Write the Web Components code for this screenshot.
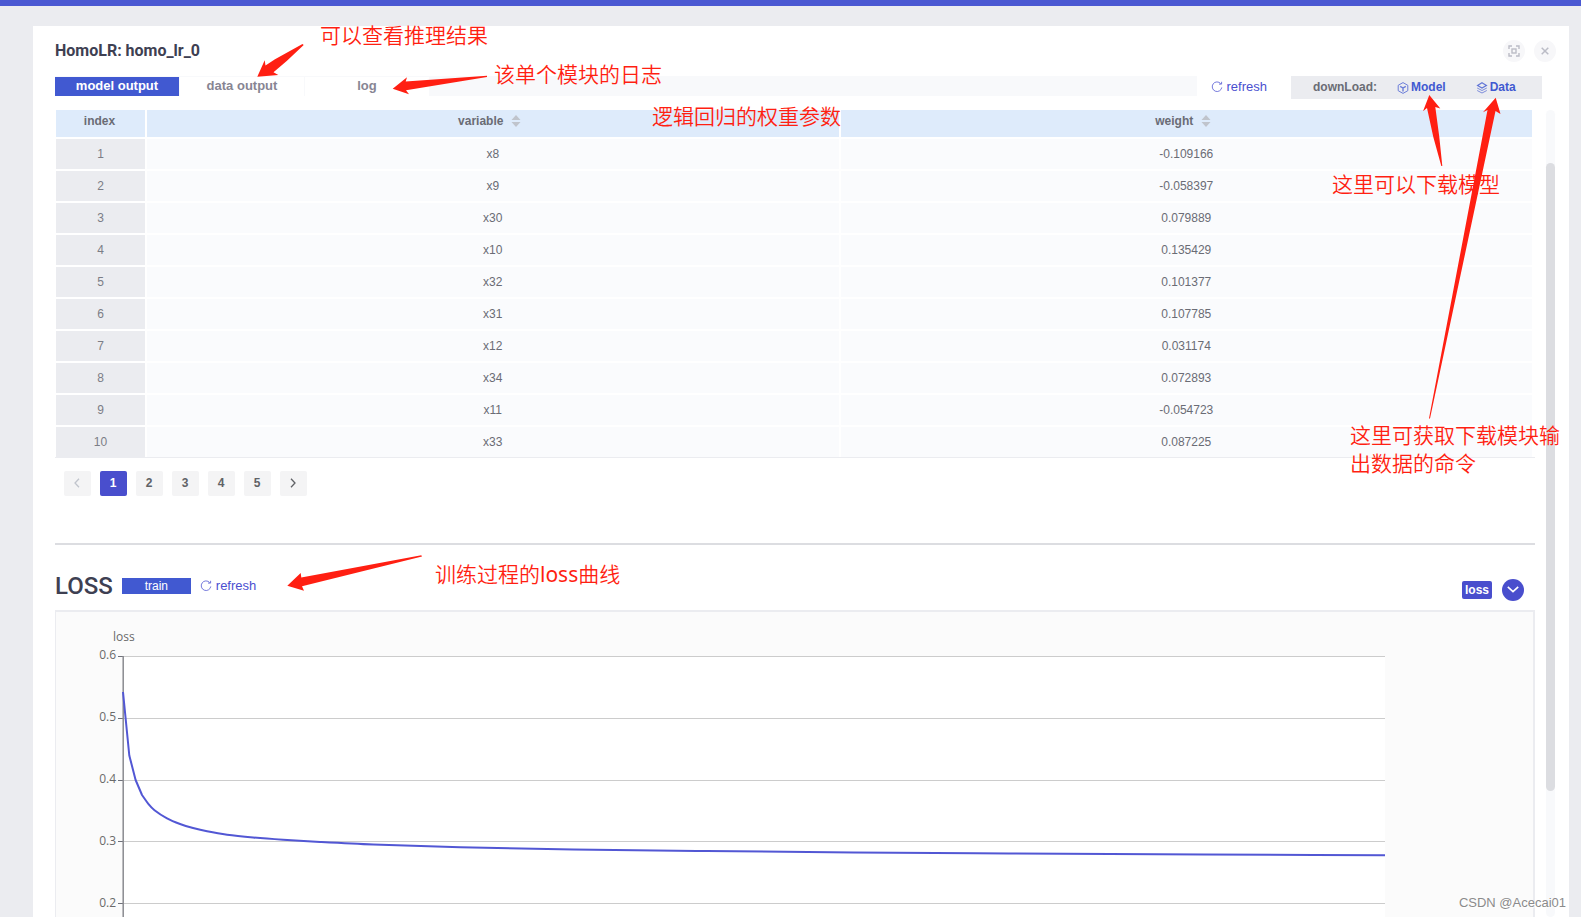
<!DOCTYPE html>
<html lang="zh"><head><meta charset="utf-8"><title>HomoLR: homo_lr_0</title>
<style>
html,body{margin:0;height:100%}
body{background:#ebecf0;font-family:"Liberation Sans",Arial,sans-serif;overflow:hidden}
</style></head><body>
<job-page></job-page>
<script>
const define=(name,html,setup)=>customElements.define(name,class extends HTMLElement{
  constructor(){super();const r=this.attachShadow({mode:'open'});
    const t=document.createElement('template');
    t.innerHTML='<style>*{box-sizing:border-box}button{font:inherit;color:inherit;border:0;padding:0;margin:0;background:none;cursor:pointer}svg{display:block}</style>'+html;
    r.append(t.content.cloneNode(true));if(setup)setup(this,r);}
});

define('refresh-link',`<style>
:host{display:block}
button{display:flex;align-items:center;gap:4px;font-size:13px;line-height:20px;color:#4a4fd0}
</style><button type="button"><svg width="12" height="12" viewBox="0 0 12 12" fill="none" stroke="currentColor"><path d="M9.7 2.6A4.8 4.8 0 1 0 10.8 6.4" stroke-opacity=".75"/><path d="M8 3.1h2.6V.8" stroke-opacity=".75"/></svg>refresh</button>`);

define('round-button',`<style>
:host{display:block}
button{display:flex;width:22px;height:22px;border-radius:11px;align-items:center;justify-content:center;background:#f7f7f9;color:#bbbcc6}
:host([primary]) button{background:#494ecd;color:#fff}
</style><button type="button"><slot></slot></button>`,(h,r)=>{r.querySelector('button').setAttribute('aria-label',h.getAttribute('label')||'')});

define('panel-header',`<style>
:host{display:flex;align-items:center;gap:9px;height:49px;margin-bottom:1px}
h1{margin:0;flex:1;font:700 16px/20px Roboto,"Liberation Sans",sans-serif;color:#3e4052}
</style><h1><slot></slot></h1>
<round-button label="full screen"><svg width="12" height="12" viewBox="0 0 12 12" fill="none" stroke="currentColor" stroke-width="1.4"><path d="M1 4V1h3M8 1h3v3M11 8v3H8M4 11H1V8"/><rect x="4" y="4" width="4" height="4"/></svg></round-button>
<round-button label="close"><svg width="8" height="8" viewBox="0 0 8 8" fill="none" stroke="currentColor" stroke-width="1.5"><path d="M.7.7l6.6 6.6M7.3.7L.7 7.3"/></svg></round-button>`);

define('output-tabs',`<style>
:host{display:flex;flex:1;height:20px;background:#f8f9fb}
button{width:125px;height:20px;font-size:13px;line-height:16px;padding-bottom:2px;font-weight:700;background:#fff;border-top:1px solid #f8f9fb;border-right:1px solid #f8f9fb;color:#878593}
button[aria-selected=true]{background:#4159d1;color:#fff;background-clip:padding-box}
</style>
<button role="tab" aria-selected="true">model output</button><button role="tab" aria-selected="false">data output</button><button role="tab" aria-selected="false">log</button>`);

define('download-bar',`<style>
:host{display:flex;width:251px;height:23px;background:#ebecf0;align-items:center;padding:0 0 0 22px;font-size:12px;line-height:21px;font-weight:700;color:#6a6c75}
span{margin-right:20px}
a{display:flex;align-items:center;gap:2px;color:#4159d1;text-decoration:none;margin-right:30px}
</style><span>downLoad:</span>
<a href="#model"><svg width="12" height="12" viewBox="0 0 12 12" fill="none" stroke="currentColor" opacity=".75"><path d="M6 .6l4.8 2.7v5.4L6 11.4 1.2 8.7V3.3z"/><path d="M3.2 4.3L6 6l2.8-1.7M6 6v3.4" stroke-width="1.4"/></svg>Model</a>
<a href="#data"><svg width="12" height="12" viewBox="0 0 12 12" fill="none" stroke="currentColor" opacity=".8"><path d="M6 .8l4.4 2.6L6 6 1.6 3.4z" stroke-width="1.2"/><path d="M1.2 6L6 8.5 10.8 6M1.2 8.5L6 11l4.8-2.5" opacity=".8"/></svg>Data</a>`);

define('weight-table',`<style>
:host{display:block;border-bottom:1px solid #ebecf0;padding-right:1px}
table{width:100%;border-collapse:separate;border-spacing:0;table-layout:fixed;font-size:12px;color:#6a6c75;text-align:center}
col.i{width:92px}
th,td{padding:0;border-style:solid;border-color:#fff}
th{height:29px;background:#deebfb;border-width:0 2px 2px 0;line-height:20px;padding:0 6px 6px 0}
th:first-child{padding-right:2px}
th:first-child,td:first-child{border-left-width:1px}
td{height:32px;background:#fafbfd;border-width:0 2px 2px 0;line-height:18px}
td:first-child{background:#ebecf0;color:#7b7d86}
tr:last-child td{border-bottom-width:0;height:30px}
th button{display:inline-flex;align-items:center;gap:8px;font-weight:700}
</style><table><colgroup><col class="i"><col><col></colgroup><thead><tr><th>index</th></tr></thead><tbody></tbody></table>`,(h,r)=>{
  const sort='<svg width="10" height="12" viewBox="0 0 10 12" fill="#c0c4cc"><path d="M5 0l4.5 5h-9zM5 12L.5 7h9z"/></svg>';
  r.querySelector('thead tr').insertAdjacentHTML('beforeend',['variable','weight'].map(n=>`<th><button type="button">${n}${sort}</button></th>`).join(''));
  const rows=[['x8','-0.109166'],['x9','-0.058397'],['x30','0.079889'],['x10','0.135429'],['x32','0.101377'],['x31','0.107785'],['x12','0.031174'],['x34','0.072893'],['x11','-0.054723'],['x33','0.087225']];
  r.querySelector('tbody').innerHTML=rows.map((x,i)=>`<tr><td>${i+1}</td><td>${x[0]}</td><td>${x[1]}</td></tr>`).join('');
});

define('page-list',`<style>
:host{display:flex;gap:9px;padding:13px 9px 0}
button{width:27px;height:25px;border-radius:2px;background:#f4f4f5;font-size:12px;line-height:22px;padding:0 1px 2px 0;font-weight:700;color:#606266;display:flex;align-items:center;justify-content:center}
button[aria-current]{background:#494ecd;color:#fff}
button:disabled{color:#c0c4cc}
</style><button type="button" disabled aria-label="previous"><svg width="6" height="10" viewBox="0 0 6 10" fill="none" stroke="currentColor" stroke-width="1.3"><path d="M5 .8L1 5l4 4.2"/></svg></button>
<button type="button" aria-current="page">1</button><button type="button">2</button><button type="button">3</button><button type="button">4</button><button type="button">5</button>
<button type="button" aria-label="next"><svg width="6" height="10" viewBox="0 0 6 10" fill="none" stroke="currentColor" stroke-width="1.3"><path d="M1 .8L5 5 1 9.2"/></svg></button>`);

define('loss-header',`<style>
:host{display:flex;align-items:center;height:65px;padding:16px 11px 0 0}
h2{margin:0 9px 0 0;font:500 24px/28px Roboto,"Liberation Sans",sans-serif;color:#3e4052}
.train{width:69px;height:16px;background:#4159d1;color:#fff;font-size:12px;line-height:16px;margin-right:9px}
.tag{margin:9px 10px 0 auto;height:18px;padding:0 3px;border-radius:2px;background:#494ecd;color:#fff;font-size:12px;line-height:18px;font-weight:700}
round-button{margin-top:8px}
</style><h2>LOSS</h2><button type="button" class="train">train</button><refresh-link></refresh-link>
<button type="button" class="tag">loss</button><round-button primary label="collapse"><svg width="12" height="7" viewBox="0 0 12 7" fill="none" stroke="currentColor" stroke-width="1.6"><path d="M.8.8L6 5.6 11.2.8"/></svg></round-button>`);

define('loss-chart',`<style>
:host{display:grid;grid-template-columns:60px 1fr;grid-template-rows:44px 1fr;column-gap:7px;padding-right:148px;background:#fbfbfb;border:solid #ebecf0;border-width:2px 2px 0 1px;overflow:hidden;font:12px/16px "Open Sans","Noto Sans",sans-serif;color:#6a6a6a}
.name{grid-column:1/3;padding:17px 0 0 57px}
ol{list-style:none;margin:-9px 0 0;padding:0;text-align:right}
li{height:62px}
.plot{background:#fff;min-width:0}
svg{width:100%;height:370px;overflow:visible}
path{fill:none;vector-effect:non-scaling-stroke}
</style><div class="name">loss</div><ol><li>0.6</li><li>0.5</li><li>0.4</li><li>0.3</li><li>0.2</li></ol>
<div class="plot"><svg viewBox="0 0 1261 370" preserveAspectRatio="none">
<path stroke="#ccc" d="M0 .5H1261M0 62.5H1261M0 124.5H1261M0 185.5H1261M0 247.5H1261"/>
<path stroke="#6e7079" d="M-5 .5H0M-5 62.5H0M-5 124.5H0M-5 185.5H0M-5 247.5H0"/>
<path stroke="#8a8b90" stroke-width="1.5" d="M.2 0V370"/>
<path class="curve" stroke="#5257d4" stroke-width="2" stroke-linejoin="round"/>
</svg></div>`,(h,r)=>{
  /* the first readings are joined by straight lines, the long tail by a smooth curve */
  const head=[[0,36],[6.3,99.5],[12.6,124],[19,139]];
  const tail=[[19,139],[25.3,147.8],[31.5,154.2],[44,162.4],[57,168],[70,172],[84,175.3],[104,178.7],[130,181.4],[160,183.7],[197,186],[250,188.6],[337,191.3],[450,193.4],[583,195],[730,196.4],[885,197.4],[1080,198.5],[1261,199.3]];
  let d='M'+head.map(p=>p.join(' ')).join('L');
  for(let i=0;i<tail.length-1;i++){
    const a=tail[i-1]||tail[i],b=tail[i],c=tail[i+1],e=tail[i+2]||c,w=c[0]-b[0];
    const mb=(c[1]-a[1])/(c[0]-a[0]),mc=(e[1]-b[1])/(e[0]-b[0]);
    d+=`C${b[0]+w/3} ${b[1]+mb*w/3} ${c[0]-w/3} ${c[1]-mc*w/3} ${c[0]} ${c[1]}`;
  }
  r.querySelector('.curve').setAttribute('d',d);
});

define('scroll-rail',`<style>
:host{display:block;width:9px;border-radius:5px;background:#f8f9fb;padding-top:53px}
div{height:628px;border-radius:5px;background:#dcdde1}
</style><div></div>`);

/* hand-drawn remarks laid over the page */
define('note-layer',`<style>
:host{position:absolute;inset:0;pointer-events:none;overflow:hidden;color:#ff1f12;font:350 21px/28px "Noto Sans CJK SC",sans-serif}
p,svg{position:absolute;margin:0;white-space:nowrap}
span{font-family:"Noto Sans",sans-serif;font-weight:400}
svg{fill:#ff1f12;top:0}
.l{left:0}.r{right:0}
.mark{right:15px;bottom:4px;font:13px/20px "Liberation Sans",sans-serif;color:#8b8b8b;text-shadow:0 0 1px #fff,1px 1px 1px #fff}
</style>
<p style="left:320px;top:20px">可以查看推理结果</p>
<p style="left:494px;top:59px">该单个模块的日志</p>
<p style="left:652px;top:101px">逻辑回归的权重参数</p>
<p style="left:435px;top:559px">训练过程的<span>loss</span>曲线</p>
<p style="right:81px;top:169px">这里可以下载模型</p>
<p style="right:21px;top:420px">这里可获取下载模块输<br>出数据的命令</p>
<svg class="l" width="500" height="620"><path d="M257.3 76.7L264.7 60.3 265.5 65.5 275 59.3 302.5 44 303.7 45 286.7 61 273.5 72.3 278.3 75z"/><path d="M392.7 88.7L407 77.3 405.7 81.5 487 75.8V77L406 90.3 409 94.3z"/><path d="M287.3 585.7L300.7 573 301.3 577.5 421.3 555.3 422 556.5 302 586.3 304 590.7z"/></svg>
<svg class="r" width="281" height="500" viewBox="1300 0 281 500"><path d="M1429.3 95L1440.3 108.5 1435.3 107 1439.3 137 1442.3 166H1441.3L1433.3 137 1427 108 1423 111.3z"/><path d="M1495.7 97.7L1500.5 114 1495.5 111 1430 418.5H1429L1487.5 110 1483 112.3z"/></svg>
<p class="mark">CSDN @Acecai01</p>`);

define('job-page',`<style>
:host{display:flex;flex-direction:column;height:100vh;border-top:6px solid #4a58d2;position:relative;box-sizing:border-box;overflow:hidden}
main{flex:1;min-height:0;margin:20px 12px 0 33px;background:#fff;padding:0 13px 0 22px;display:flex;flex-direction:column}
.tools{display:flex;align-items:flex-start;height:34px;padding-right:14px}
.tools refresh-link{margin:1px 24px 0 14px}
.body{flex:1;min-height:0;display:flex;gap:11px;padding-right:1px}
.content{flex:1;min-width:0;display:flex;flex-direction:column;overflow:hidden}
hr{width:100%;height:2px;border:0;margin:47px 0 0;background:#dcdde1;flex:none}
loss-header,page-list,weight-table{flex:none}
loss-chart{flex:1;min-height:0}
note-layer{top:-6px}
</style><main><panel-header>HomoLR: homo_lr_0</panel-header>
<div class="tools"><output-tabs role="tablist"></output-tabs><refresh-link></refresh-link><download-bar></download-bar></div>
<div class="body"><div class="content"><weight-table></weight-table><page-list></page-list><hr><loss-header></loss-header><loss-chart></loss-chart></div><scroll-rail></scroll-rail></div></main>
<note-layer></note-layer>`);
</script></body></html>
